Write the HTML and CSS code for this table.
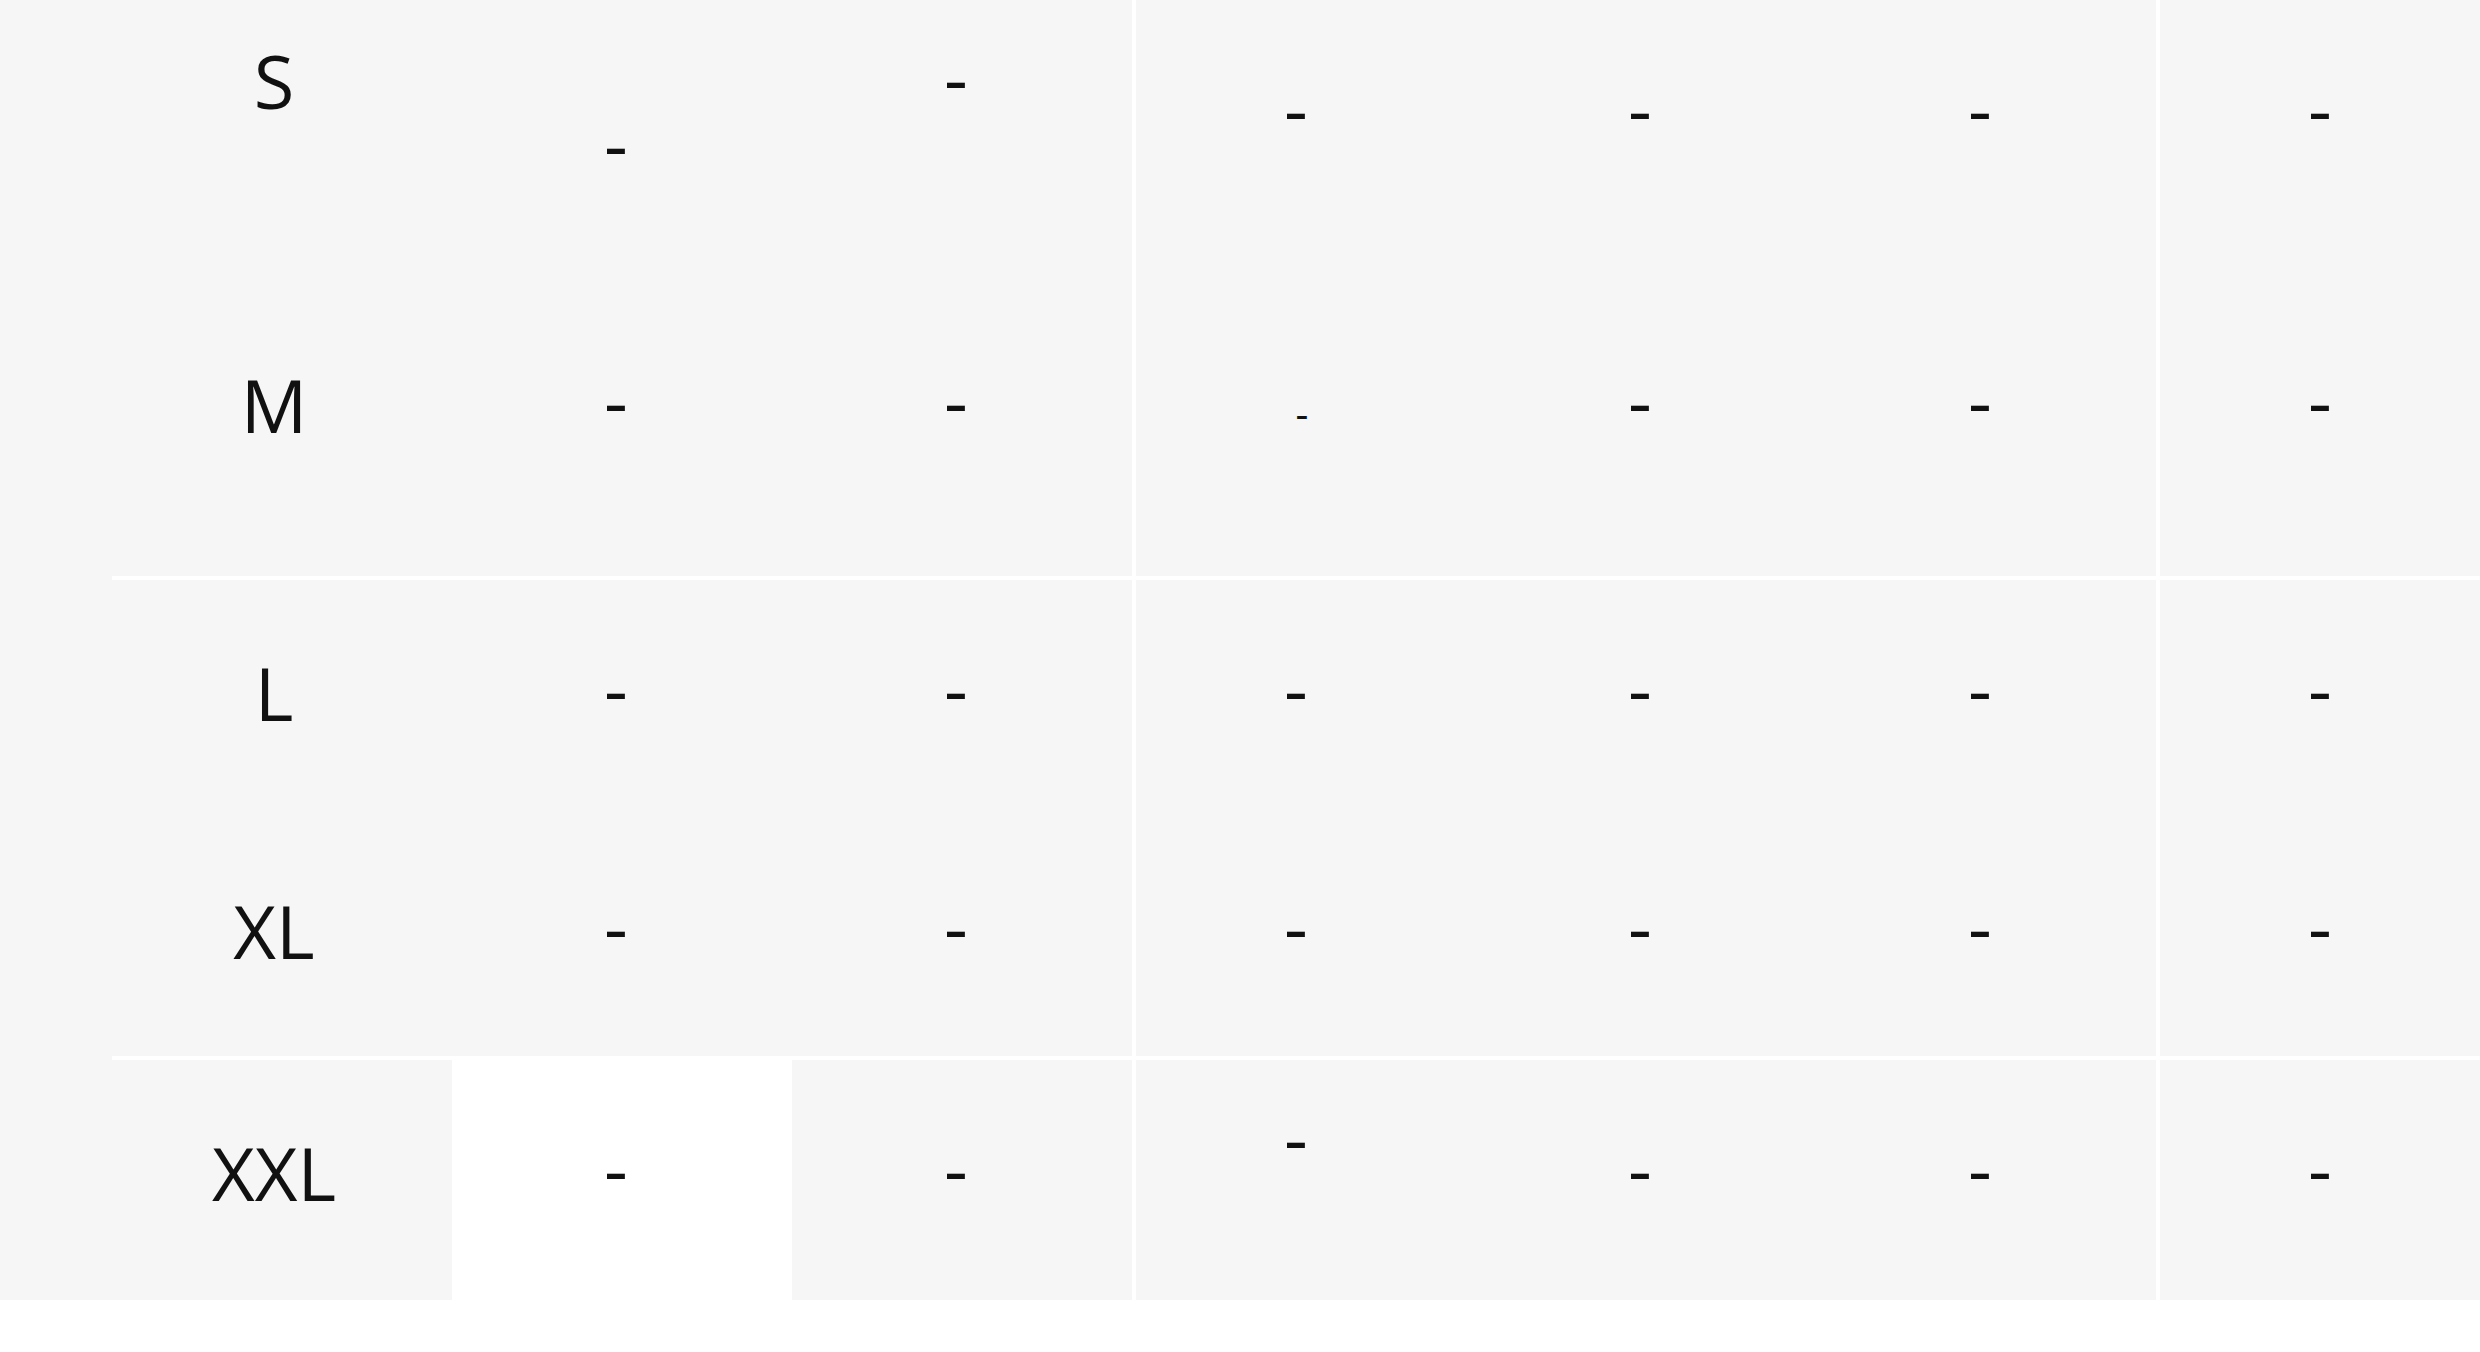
FILE: index.html
```html
<!DOCTYPE html>
<html lang="en">
<head>
<meta charset="utf-8">
<title>Size table</title>
<link rel="stylesheet" href="styles.css">
</head>
<body>
<div class="sheet">
  <table class="sizes">
    <tbody>
      <tr class="row row-s">
        <th class="cell label top">S</th>
        <td class="cell dash bottom low">-</td>
        <td class="cell dash top sep">-</td>
        <td class="cell dash after">-</td>
        <td class="cell dash">-</td>
        <td class="cell dash sep">-</td>
        <td class="cell dash after">-</td>
      </tr>
      <tr class="row row-m ruled">
        <th class="cell label">M</th>
        <td class="cell dash">-</td>
        <td class="cell dash sep">-</td>
        <td class="cell dash after tiny-cell"><span class="tiny">-</span></td>
        <td class="cell dash">-</td>
        <td class="cell dash sep">-</td>
        <td class="cell dash after">-</td>
      </tr>
      <tr class="row">
        <th class="cell label">L</th>
        <td class="cell dash">-</td>
        <td class="cell dash sep">-</td>
        <td class="cell dash after">-</td>
        <td class="cell dash">-</td>
        <td class="cell dash sep">-</td>
        <td class="cell dash after">-</td>
      </tr>
      <tr class="row ruled">
        <th class="cell label">XL</th>
        <td class="cell dash">-</td>
        <td class="cell dash sep">-</td>
        <td class="cell dash after">-</td>
        <td class="cell dash">-</td>
        <td class="cell dash sep">-</td>
        <td class="cell dash after">-</td>
      </tr>
      <tr class="row">
        <th class="cell label">XXL</th>
        <td class="cell dash blank">-</td>
        <td class="cell dash sep">-</td>
        <td class="cell dash after top">-</td>
        <td class="cell dash">-</td>
        <td class="cell dash sep">-</td>
        <td class="cell dash after">-</td>
      </tr>
    </tbody>
  </table>
</div>
</body>
</html>
```

FILE: styles.css
```css
html, body {
  margin: 0;
  padding: 0;
  background: #ffffff;
  overflow: hidden;
}

body {
  width: 2480px;
  height: 1352px;
}

.sheet {
  background: #f6f6f6;
  padding-left: 112px;
  overflow: hidden;
  width: 2368px;
}

.sizes {
  border-collapse: separate;
  border-spacing: 0;
  table-layout: fixed;
  width: 2388px;
  font-family: "Open Sans", "Noto Sans", sans-serif;
  font-size: 74px;
  font-weight: 400;
  line-height: normal;
  color: #111111;
}

.row {
  height: 240px;
}

.row-m {
  height: 340px;
}

.cell {
  box-sizing: border-box;
  width: 340px;
  padding: 28px 12px 46px 0;
  text-align: center;
  vertical-align: middle;
  font-weight: 400;
  white-space: nowrap;
}

.label {
  padding-top: 30px;
  padding-right: 16px;
}

.dash {
  padding-top: 26px;
  padding-bottom: 51px;
}

.dash.low {
  padding-bottom: 47px;
}

.row-m .label {
  padding-top: 38px;
}

.row-m .dash {
  padding-top: 34px;
}

.sep {
  width: 344px;
  border-right: 4px solid #ffffff;
}

.after {
  padding-right: 20px;
}

.tiny-cell {
  padding-right: 8px;
}

.ruled .cell {
  border-bottom: 4px solid #ffffff;
}

.top {
  vertical-align: top;
}

.bottom {
  vertical-align: bottom;
}

.blank {
  background: #ffffff;
}

.tiny {
  font-size: 40px;
}
```
